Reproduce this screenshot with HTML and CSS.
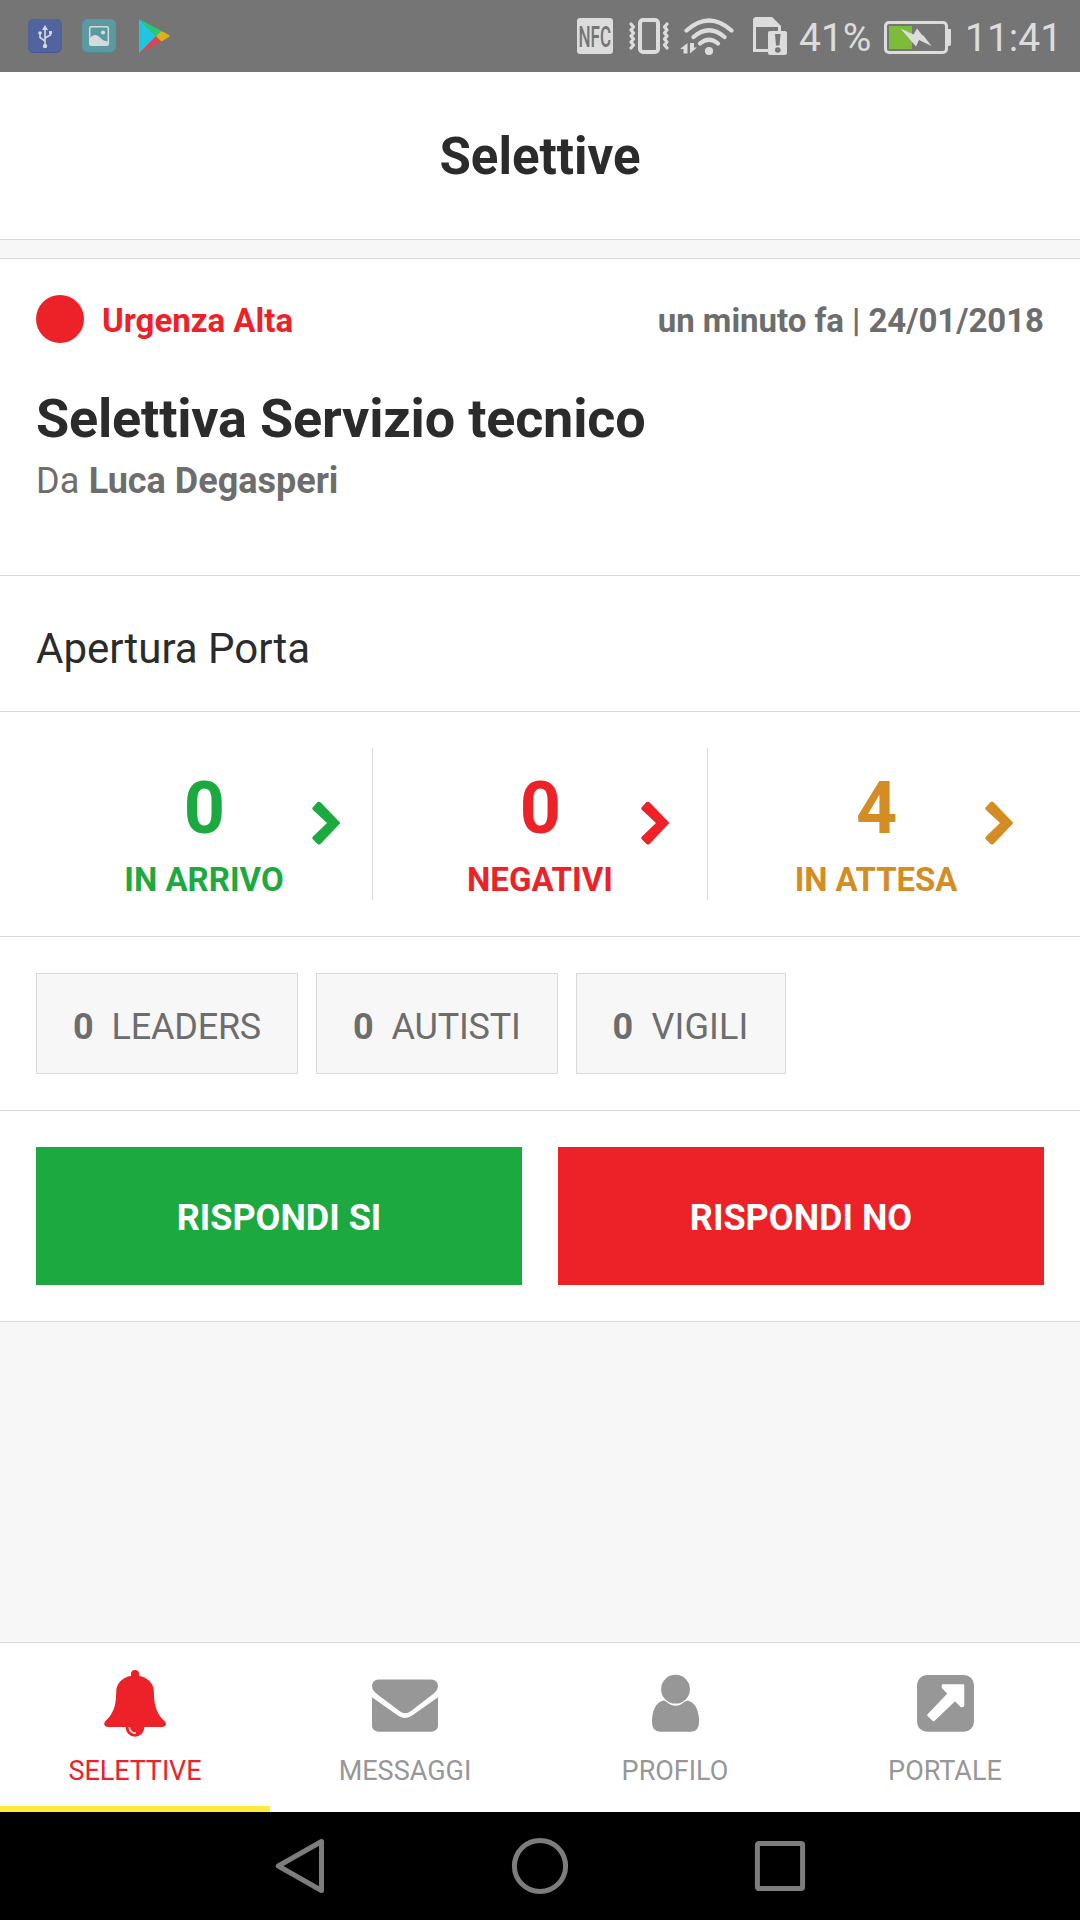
FILE: index.html
```html
<!DOCTYPE html>
<html lang="it">
<head>
<meta charset="utf-8">
<title>Selettive</title>
<link rel="stylesheet" href="styles.css">
</head>
<body>
<div class="screen">
  <div class="status">
    <div class="status-left">
      <svg width="34" height="34" viewBox="0 0 34 34"><rect width="34" height="34" rx="6" fill="#46558f"/><rect width="34" height="33" rx="6" fill="#5264a0"/><g stroke="#d5d7dd" stroke-width="1.6" fill="none"><path d="M17 8v19M17 22l-5-3.500v-4M17 19l5.500-3v-3"/></g><g fill="#d5d7dd"><path d="M17 6l3 5h-6z"/><circle cx="17" cy="27" r="2.200"/><circle cx="12" cy="14" r="1.800"/><rect x="21" y="12" width="3" height="3"/></g></svg>
      <svg width="34" height="34" viewBox="0 0 34 34"><rect width="34" height="34" rx="6" fill="#4f8a90"/><rect width="34" height="33" rx="6" fill="#5a9ba1"/><rect x="7.700" y="7.700" width="18.600" height="18.600" rx="1.500" fill="none" stroke="#d5dada" stroke-width="1.500"/><circle cx="21" cy="13.500" r="2.100" fill="#d5dada"/><path d="M8 19c3-4 7-4 10-.5 2.500 3 5 3.500 8 4V26H8z" fill="#d5dada"/></svg>
      <svg class="play" width="31" height="35" viewBox="0 0 31 35"><path d="M0 0l17 17.300L0 34.500z" fill="#22c4e0"/><path d="M0 0l22.500 12-5.500 5.300z" fill="#24cc70"/><path d="M0 34.500l17-17.200 5.500 5.200z" fill="#dc4454"/><path d="M22.500 12l7.500 4q1.200 1 0 2l-7.500 4.500-5.500-5.200z" fill="#deb01c"/></svg>
    </div>
    <div class="status-right">
      <svg class="nfc" width="36" height="36" viewBox="0 0 36 36"><rect width="36" height="36" rx="3" fill="#dcdcdc"/><text x="1.500" y="28.500" textLength="32.500" lengthAdjust="spacingAndGlyphs" class="nfc-text">NFC</text></svg>
      <svg class="vibrate" width="40" height="36" viewBox="0 0 40 36"><rect x="11" y="2" width="18" height="32" rx="3" fill="none" stroke="#dcdcdc" stroke-width="4"/><path d="M2 6l2.500 3L2 12l2.500 3L2 18l2.500 3L2 24l2.500 3L2 30M38 6l-2.500 3 2.500 3-2.500 3 2.500 3-2.500 3 2.500 3-2.500 3 2.500 3" fill="none" stroke="#dcdcdc" stroke-width="3.200" stroke-linecap="round" stroke-linejoin="round"/></svg>
      <svg class="wifi" width="54" height="38" viewBox="0 0 54 38"><g fill="none" stroke="#dcdcdc" stroke-width="4.200" stroke-linecap="round"><path d="M6.500 12.500q22.500-20 45 0M13.500 19q15.500-13.500 31 0M20 25.500q9-7.500 18 0"/></g><circle cx="29" cy="33" r="4.100" fill="#dcdcdc"/><path d="M7.500 25v10.500h-4V31H0zM10 25v10.500L17 29.500h-3V25z" fill="#dcdcdc"/></svg>
      <svg class="sim" width="34" height="38" viewBox="0 0 34 38"><path d="M1.500 1.500h17l8 8V14M1.500 1.500V33.500H15" fill="none" stroke="#dcdcdc" stroke-width="3"/><path d="M1 1h18l8.500 9H1z" fill="#dcdcdc"/><rect x="15" y="14" width="19" height="24" rx="2" fill="#dcdcdc"/><path d="M22 17h5.500l-1 11.500h-3.500z" fill="#757575"/><circle cx="24.800" cy="33" r="2.800" fill="#757575"/></svg>
      <span class="level">41%</span>
      <svg class="battery" width="67" height="33" viewBox="0 0 67 33"><rect x="1.500" y="1.500" width="61" height="30" rx="3.500" fill="none" stroke="#dcdcdc" stroke-width="3"/><path d="M64 8h2q1 0 1 1v14q0 2-2 2h-1z" fill="#dcdcdc"/><rect x="5" y="5" width="23" height="23" fill="#7fbb3b"/><path d="M16.500 7.500l13 6L33 7.500l5.500 7L39 14l8.500 11-12.500-6L32 25.500z" fill="#dcdcdc"/></svg>
      <span class="clock">11:41</span>
    </div>
  </div>

  <header class="header"><h1>Selettive</h1></header>

  <main class="content">
    <article class="card">
      <section class="summary">
        <div class="meta">
          <span class="dot"></span>
          <span class="urgency">Urgenza Alta</span>
          <span class="time">un minuto fa | 24/01/2018</span>
        </div>
        <h2>Selettiva Servizio tecnico</h2>
        <p class="author">Da <b>Luca Degasperi</b></p>
      </section>
      <section class="message">Apertura Porta</section>
      <section class="counters">
        <div class="counter green"><span class="number">0</span><span class="label">IN ARRIVO</span><svg class="chevron" viewBox="0 0 28 44"><path d="M1 9Q-.5 7.500 1 6L5.500 1Q7 .200 8.500 1.200L27.500 21Q28.500 22 27.500 23L8.500 43Q7 44 5.500 43L1 38.500Q-.5 37 1 35.500L15 22z"/></svg></div>
        <div class="counter red"><span class="number">0</span><span class="label">NEGATIVI</span><svg class="chevron" viewBox="0 0 28 44"><path d="M1 9Q-.5 7.500 1 6L5.500 1Q7 .200 8.500 1.200L27.500 21Q28.500 22 27.500 23L8.500 43Q7 44 5.500 43L1 38.500Q-.5 37 1 35.500L15 22z"/></svg></div>
        <div class="counter orange"><span class="number">4</span><span class="label">IN ATTESA</span><svg class="chevron" viewBox="0 0 28 44"><path d="M1 9Q-.5 7.500 1 6L5.500 1Q7 .200 8.500 1.200L27.500 21Q28.500 22 27.500 23L8.500 43Q7 44 5.500 43L1 38.500Q-.5 37 1 35.500L15 22z"/></svg></div>
      </section>
      <section class="chips">
        <div class="chip"><b>0</b><span>LEADERS</span></div>
        <div class="chip"><b>0</b><span>AUTISTI</span></div>
        <div class="chip"><b>0</b><span>VIGILI</span></div>
      </section>
      <section class="actions">
        <button class="yes">RISPONDI SI</button>
        <button class="no">RISPONDI NO</button>
      </section>
    </article>
  </main>

  <nav class="tabs">
    <a class="tab active"><svg width="80" height="72" viewBox="0 0 80 72"><path d="M40 2a4 4 0 0 1 4 4v2C52 9 58.900 15 58.900 24C58.900 40 63 47 70 53.500Q71 55 71 56Q70.500 59 67 59H13Q9.500 59 9.200 56Q9.200 55 10 53.500C17 47 21.200 40 21.200 24C21.200 15 28 9 36 8V6a4 4 0 0 1 4-4z"/><path d="M30.700 58h18.600v1.500a9.300 9.300 0 0 1-18.600 0z"/><path d="M34.200 59q.6 6 6.800 6.300" fill="none" stroke="#fff" stroke-width="1.500"/></svg><span>SELETTIVE</span></a>
    <a class="tab"><svg width="80" height="72" viewBox="0 0 80 72"><path d="M7 18a6.500 6.500 0 0 1 6.500-6.600h53A6.500 6.500 0 0 1 73 18C73 21 71 24 67.500 26.500L46 43Q40 47.500 34.500 43L12.500 26.500C9 24 7 21 7 18z"/><path d="M7 29.300L32.500 47.300Q40 52.500 47.500 47.300L73 29.300V57.500a6 6 0 0 1-6 6.200H13a6 6 0 0 1-6-6.200z"/></svg><span>MESSAGGI</span></a>
    <a class="tab"><svg width="80" height="72" viewBox="0 0 80 72"><circle cx="40.500" cy="21.200" r="14.400"/><path d="M28.500 32.600Q30 32.600 31 33.500Q40.500 42 50 33.500Q51.500 32.400 53 32.800C61 34.500 64.100 44 64.100 54Q64 63.700 56 63.700H25Q17 63.700 17 54C17 44 20 34.500 28.500 32.600z"/></svg><span>PROFILO</span></a>
    <a class="tab"><svg width="80" height="72" viewBox="0 0 80 72"><rect x="12" y="7" width="57" height="56.700" rx="10"/><path d="M38 17.500H58V37.500L56.500 38L50 31.500L28.500 52L23.500 47L44 25.700L38 19.500z" fill="#fff" stroke="#fff" stroke-width="2.500" stroke-linejoin="round"/></svg><span>PORTALE</span></a>
  </nav>

  <div class="system">
    <svg width="60" height="60" viewBox="0 0 60 60"><path class="key" d="M51.500 5.500V54.500L8.300 30z"/></svg>
    <svg width="60" height="60" viewBox="0 0 60 60"><circle class="key" cx="30" cy="30" r="25.600"/></svg>
    <svg width="60" height="60" viewBox="0 0 60 60"><rect class="key" x="7.400" y="7.400" width="45.200" height="45.200" rx="1.500"/></svg>
  </div>
</div>
</body>
</html>
```
FILE: styles.css
```css
* { box-sizing: border-box; margin: 0; padding: 0; }
body { font-family: Roboto, sans-serif; color: #2b2b2b; background: #f7f7f7; }
svg { display: block; flex: none; }
.screen { width: 1080px; height: 1920px; display: flex; flex-direction: column; overflow: hidden; }

.status { height: 72px; background: #757575; display: flex; justify-content: space-between; color: #dcdcdc; font-size: 39px; line-height: 76px; }
.status-left { display: flex; gap: 20px; padding: 19px 0 0 28px; }
.play { margin-left: 3px; }
.status-right { display: flex; padding-right: 24px; }
.nfc { margin: 18px 16px 0 0; overflow: visible; }
.nfc-text { font-size: 29px; line-height: 1; font-weight: 500; fill: #757575; }
.vibrate { margin: 18px 11px 0 0; }
.wifi { margin: 18px 19px 0 0; }
.sim { margin: 17px 12px 0 0; }
.level { width: 85px; }
.battery { margin: 21px 14px 0 0; }
.clock { width: 91px; }

.header { height: 168px; background: #fff; border-bottom: 1px solid #d9d9d9; text-align: center; }
.header h1 { font-size: 51px; line-height: 170px; }

.content { flex: 1; padding-top: 18px; }
.card { background: #fff; border-top: 1px solid #d9d9d9; }
.card section { border-bottom: 1px solid #d9d9d9; }
.summary { height: 317px; padding: 36px; }
.meta { display: flex; height: 48px; font-size: 33px; line-height: 52px; font-weight: 700; }
.dot { width: 48px; height: 48px; border-radius: 50%; background: #ed2228; margin-right: 18px; }
.urgency { color: #ed2228; }
.time { margin-left: auto; color: #6d6d6d; letter-spacing: -0.04px; }
.summary h2 { font-size: 54px; line-height: 64px; margin-top: 44px; letter-spacing: -0.2px; }
.author { font-size: 36px; line-height: 44px; margin-top: 8px; color: #6d6d6d; }
.author b { margin-left: 0.5px; }
.message { height: 136px; padding: 46px 36px; font-size: 42px; line-height: 54px; }

.counters { height: 225px; padding: 36px; display: grid; grid-template-columns: 337px 335px 336px; }
.counter { display: grid; grid-template-columns: 1fr auto 1fr; grid-template-rows: 103px 49px; justify-items: center; align-items: end; border-right: 1px solid #d9d9d9; font-weight: 700; }
.counter:last-child { border-right: 0; }
.number { grid-column: 2; grid-row: 1; font-size: 72px; line-height: 84px; padding-left: 1px; }
.label { grid-column: 2; grid-row: 2; font-size: 33px; line-height: 40px; }
.chevron { grid-column: 3; grid-row: 1 / 3; justify-self: start; align-self: center; width: 28px; height: 44px; margin: 0 0 3px 28px; fill: currentColor; }
.green { color: #1caa40; }
.red { color: #ed2228; }
.orange { color: #d48d24; letter-spacing: -0.1px; }

.chips { height: 174px; padding: 36px; display: flex; gap: 18px; }
.chip { height: 101px; padding: 6px 36px 0; display: flex; gap: 18px; align-items: center; border: 1px solid #d9d9d9; background: #f7f7f7; color: #6d6d6d; font-size: 36px; letter-spacing: -0.2px; }
.chip:last-child { letter-spacing: 0.15px; }

.actions { height: 211px; padding: 36px; display: flex; gap: 36px; }
.actions button { flex: 1; height: 138px; padding-top: 4px; border: 0; font: 700 36px Roboto, sans-serif; color: #fff; }
.yes { background: #1caa40; }
.no { background: #ed2228; }

.tabs { height: 170px; display: flex; background: #fff; border-top: 1px solid #d9d9d9; }
.tab { flex: 1; display: flex; flex-direction: column; align-items: center; padding-top: 25px; color: #979797; font-size: 27px; line-height: 36px; fill: currentColor; }
.tab span { margin-top: 13px; }
.active { color: #ed2228; border-bottom: 6px solid #ffeb3b; letter-spacing: -0.1px; }

.system { height: 108px; background: #000; display: flex; justify-content: center; align-items: center; gap: 180px; }
.key { fill: none; stroke: #7d7d7d; stroke-width: 5; stroke-linejoin: round; }
```
